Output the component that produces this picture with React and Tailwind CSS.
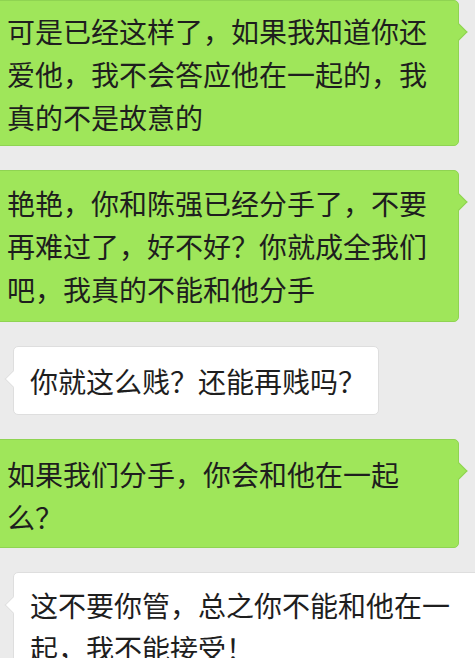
import React from "react";

// chat log, top of the list is scrolled a little off-screen
const messages = [
  { id: 1, side: "me", text: "可是已经这样了，如果我知道你还爱他，我不会答应他在一起的，我真的不是故意的", pad: "pt-[9px] pb-[6px]" },
  { id: 2, side: "me", text: "艳艳，你和陈强已经分手了，不要再难过了，好不好？你就成全我们吧，我真的不能和他分手", pad: "pt-[11px] pb-[10px]" },
  { id: 3, side: "her", text: "你就这么贱？还能再贱吗？", pad: "pt-[13px] pb-[11px]", width: "w-[366px]" },
  { id: 4, side: "me", text: "如果我们分手，你会和他在一起么？", pad: "pt-[13px] pb-[8px]" },
  { id: 5, side: "her", text: "这不要你管，总之你不能和他在一起，我不能接受！", pad: "pt-[11px] pb-[12px]", width: "w-[470px]" },
];

function Bubble({ side, text, pad, width }) {
  const mine = side === "me";
  return (
    <div
      className={
        mine
          ? "relative ml-[-10px] w-[469px] rounded-[5px] border border-[#8fd452] bg-[#9fe65a]"
          : `relative ml-[13px] ${width} rounded-[5px] border border-[#dedede] bg-white`
      }
    >
      <div className={`pl-[16px] pr-[12px] ${pad} text-[28px] leading-[43px] text-[#1e1e1e]`}>{text}</div>
      {mine ? (
        <div className="absolute right-[-7px] top-[25px] h-[12px] w-[12px] rotate-45 border-r border-t border-[#8fd452] bg-[#9fe65a]" />
      ) : (
        <div className="absolute left-[-7px] top-[26px] h-[12px] w-[12px] rotate-45 border-b border-l border-[#dedede] bg-white" />
      )}
    </div>
  );
}

export default function App() {
  return (
    <div
      className="flex h-[658px] w-[475px] flex-col gap-[24px] overflow-hidden bg-[#ebebeb]"
      style={{ fontFamily: '"Noto Sans CJK SC", "Noto Sans", sans-serif' }}
    >
      {messages.map((m) => (
        <Bubble key={m.id} {...m} />
      ))}
    </div>
  );
}
